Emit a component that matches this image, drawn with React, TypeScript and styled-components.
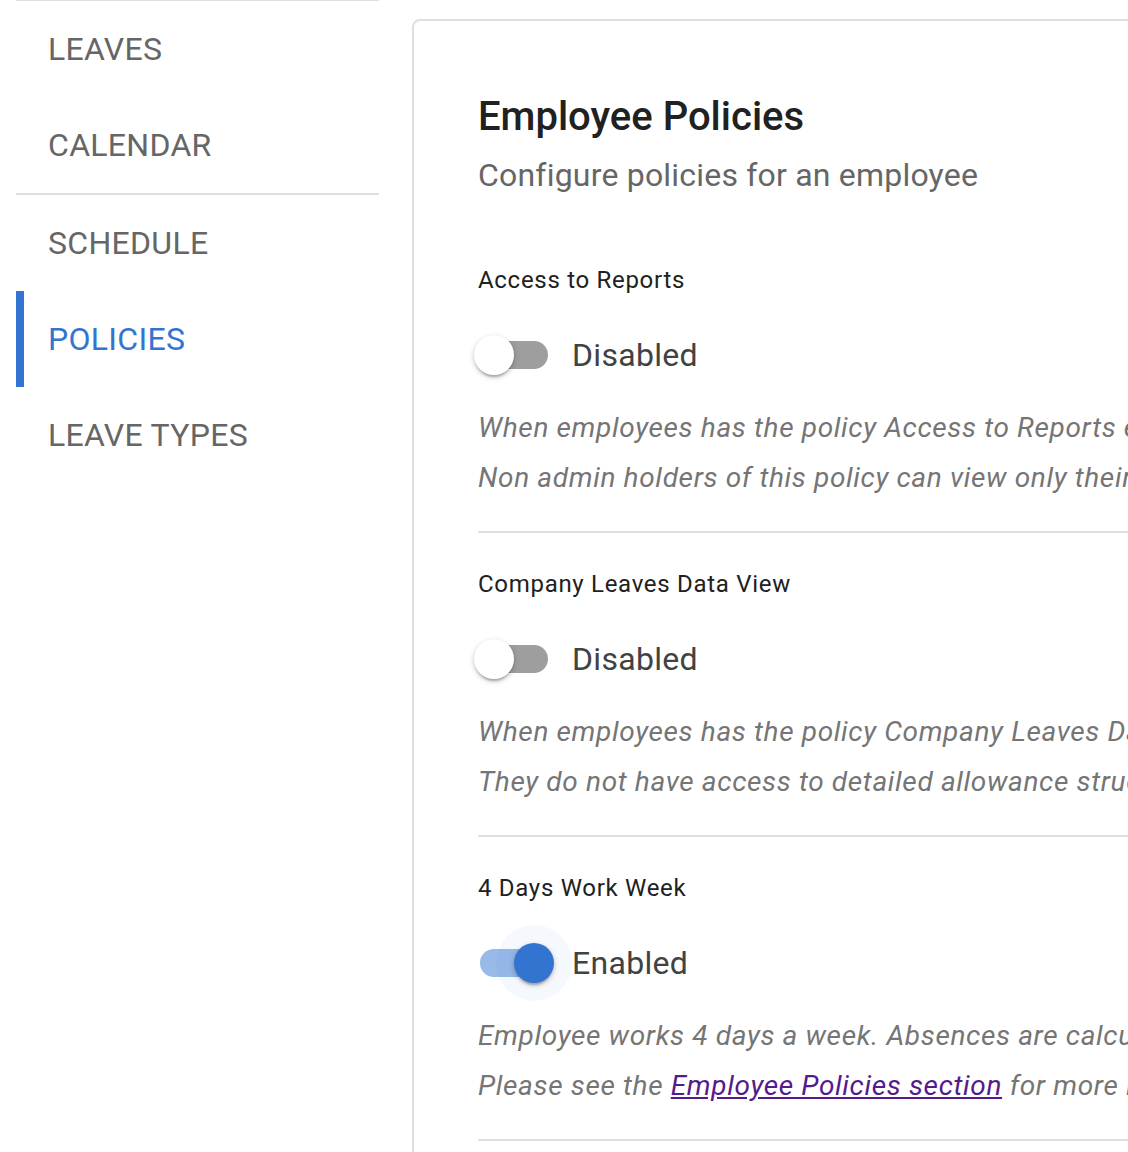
import * as React from 'react'
import styled, { createGlobalStyle } from 'styled-components'

const primary = '#3474d1'

const GlobalStyle = createGlobalStyle`
    html, body {
        margin: 0;
        padding: 0;
        background: #fff;
        overflow: hidden;
    }
    body {
        font-family: Roboto, 'Noto Sans', Arial, sans-serif;
        -webkit-font-smoothing: antialiased;
    }
`

interface IPolicy {
    title: string
    enabled: boolean
    lines: React.ReactNode[]
}

const navItems = [
    { label: 'LEAVES' },
    { label: 'CALENDAR', dividerAfter: true },
    { label: 'SCHEDULE' },
    { label: 'POLICIES', active: true },
    { label: 'LEAVE TYPES' }
]

const getPolicies = (): IPolicy[] => [
    {
        title: 'Access to Reports',
        enabled: false,
        lines: [
            'When employees has the policy Access to Reports enabled, they can view the company reports.',
            'Non admin holders of this policy can view only their own team data in reports.'
        ]
    },
    {
        title: 'Company Leaves Data View',
        enabled: false,
        lines: [
            'When employees has the policy Company Leaves Data View enabled, they can see all leaves.',
            'They do not have access to detailed allowance structure of other employees.'
        ]
    },
    {
        title: '4 Days Work Week',
        enabled: true,
        lines: [
            'Employee works 4 days a week. Absences are calculated based on a 4 days schedule.',
            <>Please see the <PolicyLink href="#">Employee Policies section</PolicyLink> for more information.</>
        ]
    }
]

export default class App extends React.Component {
    public renderPolicy = (policy: IPolicy) => {
        return (
            <Section key={policy.title}>
                <PolicyTitle>{policy.title}</PolicyTitle>
                <SwitchRow>
                    <SwitchRoot>
                        <SwitchBase $checked={policy.enabled}>
                            <Thumb $checked={policy.enabled} />
                        </SwitchBase>
                        <Track $checked={policy.enabled} />
                    </SwitchRoot>
                    <SwitchLabel>{policy.enabled ? 'Enabled' : 'Disabled'}</SwitchLabel>
                </SwitchRow>
                <Description>
                    {policy.lines.map((line, i) => <DescLine key={i}>{line}</DescLine>)}
                </Description>
                <Divider />
            </Section>
        )
    }

    public render() {
        return (
            <Page>
                <GlobalStyle />
                <Sidebar>
                    {navItems.map(item => (
                        <React.Fragment key={item.label}>
                            <NavItem $active={!!item.active}>{item.label}</NavItem>
                            {item.dividerAfter && <NavDivider />}
                        </React.Fragment>
                    ))}
                </Sidebar>
                <Card>
                    <Heading>Employee Policies</Heading>
                    <SubHeading>Configure policies for an employee</SubHeading>
                    {getPolicies().map(this.renderPolicy)}
                </Card>
            </Page>
        )
    }
}

const Page = styled.div`
    display: flex;
    align-items: flex-start;
    gap: 33px;
    padding-left: 16px;
    width: 1128px;
    height: 1152px;
    overflow: hidden;
`

const Sidebar = styled.nav`
    flex: 0 0 363px;
    display: flex;
    flex-direction: column;
    border-top: 1px solid #e0e0e0;
`

const NavItem = styled.div<{ $active: boolean }>`
    height: 96px;
    display: flex;
    align-items: center;
    padding-left: 24px;
    border-left: 8px solid ${props => props.$active ? primary : 'transparent'};
    color: ${props => props.$active ? primary : '#666'};
    font-size: 32px;
    letter-spacing: 0.3px;
    cursor: pointer;
`

const NavDivider = styled.div`
    height: 2px;
    background: #e0e0e0;
`

const Card = styled.main`
    flex: 0 0 960px;
    margin-top: 19px;
    border: 2px solid #e0e0e0;
    border-radius: 8px;
    padding: 72px 0 0 64px;
    min-height: 1200px;
    overflow: hidden;
`

const Heading = styled.h1`
    margin: 0;
    font-size: 40px;
    line-height: 48px;
    font-weight: 500;
    color: #212121;
`

const SubHeading = styled.p`
    margin: 15px 0 0;
    font-size: 32px;
    line-height: 38px;
    color: #666;
    letter-spacing: 0.2px;
`

const Section = styled.section`
    &:first-of-type {
        margin-top: 70px;
    }
    & + & {
        padding-top: 35px;
    }
`

const PolicyTitle = styled.h3`
    margin: 0;
    font-size: 24px;
    line-height: 33px;
    font-weight: 400;
    letter-spacing: 0.7px;
    color: #212121;
`

const SwitchRow = styled.label`
    display: flex;
    align-items: center;
    margin: 20px 0 0 -22px;
    height: 76px;
`

const SwitchRoot = styled.span`
    position: relative;
    flex: 0 0 116px;
    height: 76px;
    padding: 24px;
    box-sizing: border-box;
`

const Track = styled.span<{ $checked: boolean }>`
    display: block;
    width: 68px;
    height: 28px;
    border-radius: 14px;
    background: ${props => props.$checked ? primary : '#000'};
    opacity: ${props => props.$checked ? 0.5 : 0.38};
`

const SwitchBase = styled.span<{ $checked: boolean }>`
    position: absolute;
    top: 0;
    left: ${props => props.$checked ? 40 : 0}px;
    width: 76px;
    height: 76px;
    border-radius: 50%;
    z-index: 1;
    display: flex;
    align-items: center;
    justify-content: center;
    background: ${props => props.$checked ? 'rgba(52, 116, 209, 0.05)' : 'transparent'};
`

const Thumb = styled.span<{ $checked: boolean }>`
    width: 40px;
    height: 40px;
    border-radius: 50%;
    background: ${props => props.$checked ? primary : '#fff'};
    box-shadow: 0 4px 2px -2px rgba(0,0,0,0.2), 0 2px 4px 0 rgba(0,0,0,0.14), 0 2px 6px 0 rgba(0,0,0,0.12);
`

const SwitchLabel = styled.span`
    font-size: 32px;
    letter-spacing: 0.3px;
    color: #424242;
`

const Description = styled.div`
    margin-top: 10px;
`

const DescLine = styled.p`
    margin: 0;
    font-size: 28px;
    line-height: 50px;
    font-style: italic;
    color: #757575;
    white-space: nowrap;
    letter-spacing: 0.65px;
`

const PolicyLink = styled.a`
    color: #551a8b;
    text-decoration: underline;
`

const Divider = styled.hr`
    margin: 28px 0 0;
    border: 0;
    height: 2px;
    background: #e0e0e0;
`
